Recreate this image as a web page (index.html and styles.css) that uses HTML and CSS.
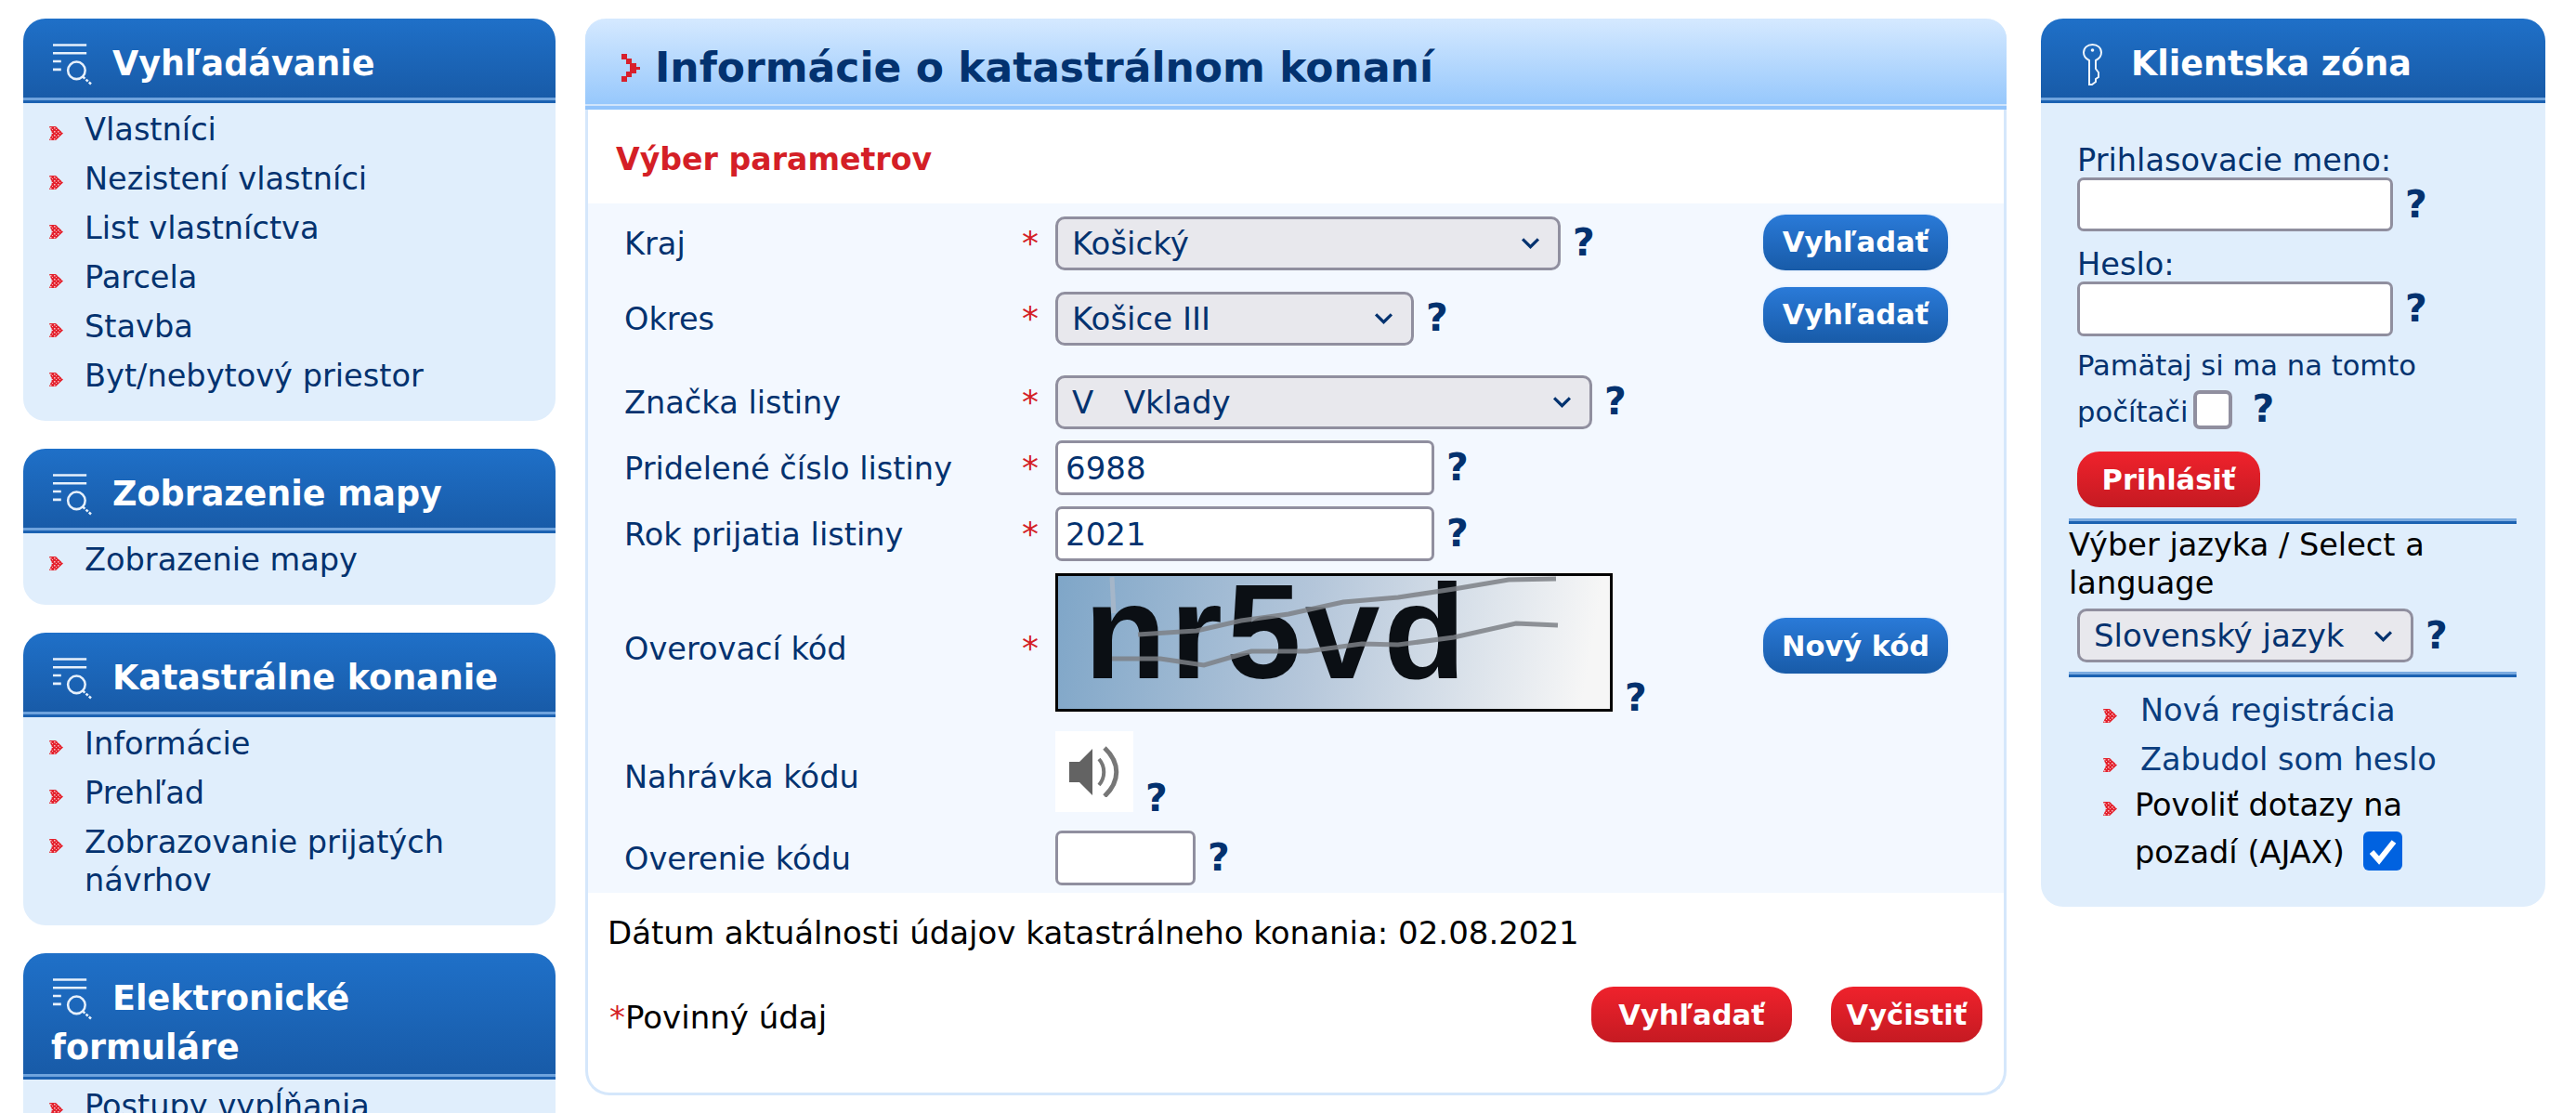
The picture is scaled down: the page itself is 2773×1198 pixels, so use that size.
FILE: index.html
```html
<!DOCTYPE html>
<html lang="sk">
<head>
<meta charset="utf-8">
<title>Informácie o katastrálnom konaní</title>
<link rel="stylesheet" href="styles.css">
</head>
<body>
<svg class="defs" width="0" height="0" aria-hidden="true">
  <defs>
    <pattern id="dith" width="4" height="4" patternUnits="userSpaceOnUse">
      <rect width="4" height="4" fill="#e3222e"/>
      <rect x="1" y="1" width="1.500" height="1.500" fill="#f8b9bd"/>
      <rect x="3" y="3" width="1" height="1" fill="#f8b9bd"/>
    </pattern>
    <symbol id="search" viewBox="0 0 44 46">
      <g fill="none" stroke="#e6f0fb" stroke-width="2.600">
        <path d="M0 2H37M0 11H37M0 20H9M0 29H9"/>
        <circle cx="26" cy="30" r="9.500"/>
        <path d="M33 37L42 45" stroke-dasharray="3 1.500"/>
      </g>
    </symbol>
    <symbol id="bullet" viewBox="0 0 15 15">
      <path d="M0 0H7L15 7.500L7 15H0L3 7.500Z" fill="url(#dith)"/>
    </symbol>
  </defs>
</svg>
<div class="page">
  <aside class="left">
    <section class="panel">
      <h2 class="phead"><svg class="hicon"><use href="#search"/></svg>Vyhľadávanie</h2>
      <ul class="menu">
        <li><svg class="bul"><use href="#bullet"/></svg><a>Vlastníci</a></li>
        <li><svg class="bul"><use href="#bullet"/></svg><a>Nezistení vlastníci</a></li>
        <li><svg class="bul"><use href="#bullet"/></svg><a>List vlastníctva</a></li>
        <li><svg class="bul"><use href="#bullet"/></svg><a>Parcela</a></li>
        <li><svg class="bul"><use href="#bullet"/></svg><a>Stavba</a></li>
        <li><svg class="bul"><use href="#bullet"/></svg><a>Byt/nebytový priestor</a></li>
      </ul>
    </section>
    <section class="panel">
      <h2 class="phead"><svg class="hicon"><use href="#search"/></svg>Zobrazenie mapy</h2>
      <ul class="menu">
        <li><svg class="bul"><use href="#bullet"/></svg><a>Zobrazenie mapy</a></li>
      </ul>
    </section>
    <section class="panel">
      <h2 class="phead"><svg class="hicon"><use href="#search"/></svg>Katastrálne konanie</h2>
      <ul class="menu">
        <li><svg class="bul"><use href="#bullet"/></svg><a>Informácie</a></li>
        <li><svg class="bul"><use href="#bullet"/></svg><a>Prehľad</a></li>
        <li><svg class="bul"><use href="#bullet"/></svg><a>Zobrazovanie prijatých<br>návrhov</a></li>
      </ul>
    </section>
    <section class="panel">
      <h2 class="phead"><svg class="hicon"><use href="#search"/></svg>Elektronické<br>formuláre</h2>
      <ul class="menu">
        <li><svg class="bul"><use href="#bullet"/></svg><a>Postupy vypĺňania</a></li>
      </ul>
    </section>
  </aside>

  <main class="center">
    <h1 class="mhead"><svg class="mbul" viewBox="0 0 20 30"><path d="M0 0H6V5H11V10H16V14H20V17H16V21H11V25H6V30H0V24H5V19H9V11H5V6H0Z" fill="#d8202c"/></svg>Informácie o katastrálnom konaní</h1>
    <h3 class="subhead">Výber parametrov</h3>
    <div class="formbox">
      <div class="row r-kraj">
        <span class="lab">Kraj</span><span class="req">*</span>
        <span class="sel w-kraj">Košický<svg class="chev" viewBox="0 0 20 12"><path d="M2 2L10 10L18 2"/></svg></span><b class="q">?</b>
        <button class="btn blue b-first">Vyhľadať</button>
      </div>
      <div class="row r-okres">
        <span class="lab">Okres</span><span class="req">*</span>
        <span class="sel w-okres">Košice III<svg class="chev" viewBox="0 0 20 12"><path d="M2 2L10 10L18 2"/></svg></span><b class="q">?</b>
        <button class="btn blue b-up">Vyhľadať</button>
      </div>
      <div class="row r-znacka">
        <span class="lab">Značka listiny</span><span class="req">*</span>
        <span class="sel w-znacka"><span class="pre">V   Vklady</span><svg class="chev" viewBox="0 0 20 12"><path d="M2 2L10 10L18 2"/></svg></span><b class="q">?</b>
      </div>
      <div class="row r-cislo">
        <span class="lab">Pridelené číslo listiny</span><span class="req">*</span>
        <span class="inp w-num">6988</span><b class="q">?</b>
      </div>
      <div class="row r-rok">
        <span class="lab">Rok prijatia listiny</span><span class="req">*</span>
        <span class="inp w-num">2021</span><b class="q">?</b>
      </div>
      <div class="row r-captcha">
        <span class="lab low">Overovací kód</span><span class="req low">*</span>
        <div class="captcha">
          <span class="ctext">nr5vd</span>
          <svg class="cnoise" viewBox="0 0 594 143">
            <g fill="none" stroke="#7d8186" stroke-width="5" opacity=".85">
              <path d="M86 63L149 59L197 48L248 41L307 28L366 23L426 14L485 4L536 3"/>
              <path d="M58 89L110 89L157 96L208 81L268 81L327 73L366 74L426 66L493 51L538 53"/>
              <path d="M58 1L60 40" stroke="#aab8c8"/>
            </g>
          </svg>
        </div>
        <b class="q q-bottom">?</b>
        <button class="btn blue b-down">Nový kód</button>
      </div>
      <div class="row r-audio">
        <span class="lab low2">Nahrávka kódu</span><span class="spacer"></span>
        <span class="audio"><svg viewBox="0 0 55 55"><path d="M0 17H11L25 3V53L11 39H0Z" fill="#636363"/><path d="M32 14C39 22 39 34 32 42" fill="none" stroke="#777" stroke-width="4"/><path d="M38 2C55 18 55 38 38 54" fill="none" stroke="#777" stroke-width="5"/></svg></span><b class="q q-bottom">?</b>
      </div>
      <div class="row r-over">
        <span class="lab">Overenie kódu</span><span class="spacer"></span>
        <span class="inp w-code"></span><b class="q">?</b>
      </div>
    </div>
    <p class="date">Dátum aktuálnosti údajov katastrálneho konania: 02.08.2021</p>
    <div class="foot">
      <span class="must"><span class="star">*</span>Povinný údaj</span>
      <button class="btn red w-search">Vyhľadať</button>
      <button class="btn red w-clear">Vyčistiť</button>
    </div>
  </main>

  <aside class="right">
    <section class="panel">
      <h2 class="phead"><svg class="kicon" viewBox="0 0 21 45"><path d="M7 18C3 16 1 13 1 9.500C1 4.500 5 1 10.500 1C16 1 20 4.500 20 9.500C20 13 18 16 14 18V27L17 31V36L14 38V41L10 44H7Z" fill="none" stroke="#eef5fc" stroke-width="2"/><circle cx="10.500" cy="7" r="1.800" fill="#eef5fc"/></svg>Klientska zóna</h2>
      <div class="login">
        <div class="llab">Prihlasovacie meno:</div>
        <div class="lrow"><span class="inp w-login h58"></span><b class="q">?</b></div>
        <div class="llab l2">Heslo:</div>
        <div class="lrow"><span class="inp w-login"></span><b class="q">?</b></div>
        <div class="remember">Pamätaj si ma na tomto<br>počítači<span class="chk"></span><b class="q q-in">?</b></div>
        <button class="btn red w-login-btn">Prihlásiť</button>
      </div>
      <div class="rule"></div>
      <div class="lang">
        <div class="langlab">Výber jazyka / Select a language</div>
        <div class="lrow lang-row"><span class="sel w-lang">Slovenský jazyk<svg class="chev" viewBox="0 0 20 12"><path d="M2 2L10 10L18 2"/></svg></span><b class="q">?</b></div>
      </div>
      <div class="rule"></div>
      <ul class="rlinks">
        <li><svg class="bul"><use href="#bullet"/></svg><a>Nová registrácia</a></li>
        <li class="second"><svg class="bul"><use href="#bullet"/></svg><a>Zabudol som heslo</a></li>
        <li class="ajax"><svg class="bul"><use href="#bullet"/></svg><span>Povoliť dotazy na<br>pozadí (AJAX)<span class="chk on"><svg viewBox="0 0 42 42"><path d="M9 22L17 31L33 11" fill="none" stroke="#fff" stroke-width="6"/></svg></span></span></li>
      </ul>
    </section>
  </aside>
</div>
</body>
</html>
```
FILE: styles.css
```css
html, body { margin: 0; padding: 0; height: 100%; overflow: hidden; background: #fff; }
body { font-family: "DejaVu Sans", Verdana, sans-serif; font-size: 33.6px; line-height: 40px; color: #03326f; }
.defs { position: absolute; }
.page { display: flex; align-items: flex-start; padding: 20px 33px 0 25px; }
.left { width: 573px; flex: none; display: flex; flex-direction: column; gap: 30px; }
.center { width: 1530px; flex: none; margin: 0 37px 0 32px; box-sizing: border-box; padding-bottom: 54px; border: 3px solid #d5e7fb; border-top: 0; border-radius: 22px 22px 26px 26px; background: #fff; }
.right { width: 543px; flex: none; }

.panel { background: #e0eefc; border-radius: 24px; overflow: hidden; }
.phead { margin: 0; box-sizing: border-box; min-height: 91px; padding: 22px 10px 8px 30px; font-size: 36.5px; line-height: 53px; font-weight: 700; color: #fff; background: linear-gradient(#1f70c8, #185ba8 calc(100% - 6px), #6fa3dd calc(100% - 6px), #6fa3dd calc(100% - 3px), #1c62b2 calc(100% - 3px)); }
.hicon { width: 43px; height: 46px; vertical-align: -11px; margin: 0 21px 0 2px; }
.kicon { width: 21px; height: 45px; vertical-align: -11px; margin: 0 31px 0 15px; }
.menu { list-style: none; margin: 0; padding: 8px 0 28px 28px; }
.menu li { display: flex; align-items: flex-start; line-height: 41px; margin-bottom: 12px; }
.menu li:last-child { margin-bottom: 0; }
.bul { width: 15px; height: 15px; flex: none; margin: 17px 23px 0 0; }

.mhead { margin: 0 -3px; height: 98px; box-sizing: border-box; display: flex; align-items: center; padding: 14px 0 6px 39px; font-size: 44px; font-weight: 700; color: #03326f; border-radius: 22px 22px 0 0; background: linear-gradient(#d5e9ff, #97c8fc calc(100% - 6px), #d0e4fb calc(100% - 6px), #d0e4fb calc(100% - 4px), #92c4fb calc(100% - 4px)); }
.mbul { width: 20px; height: 30px; margin-right: 16px; flex: none; }
.subhead { margin: 0; padding: 34px 0 27px 30px; font-size: 33.2px; line-height: 40px; font-weight: 700; color: #d41f26; }
.formbox { background: #f3f8ff; padding: 13px 0 8px; }
.row { display: flex; align-items: center; height: 59px; }
.lab { width: 467px; flex: none; padding: 3px 0 0 39px; box-sizing: border-box; }
.low { margin-top: 12px; }
.low2 { margin-top: 10px; }
.req { width: 36px; flex: none; color: #d41f26; font-size: 36px; }
.spacer { width: 36px; flex: none; }
.sel, .inp { box-sizing: border-box; height: 59px; display: flex; align-items: center; border: 3px solid #908f9f; border-radius: 7px; background: #fff; padding-left: 8px; font-size: 34px; color: #03326f; flex: none; }
.sel { background: #e8e8ed; border-radius: 10px; padding: 0 19px 0 15px; height: 58px; justify-content: space-between; }
.pre { white-space: pre; }
.chev { width: 21px; height: 13px; flex: none; }
.chev path { fill: none; stroke: #03326f; stroke-width: 3; }
.q { font-size: 41px; line-height: 41px; font-weight: 700; color: #03326f; margin-left: 13px; flex: none; }
.w-kraj { width: 544px; }
.w-okres { width: 386px; }
.w-znacka { width: 578px; }
.w-num { width: 408px; }
.w-code { width: 151px; }
.w-lang { width: 362px; }
.r-okres { margin-top: 22px; }
.r-znacka { margin-top: 31px; }
.r-cislo { margin-top: 12px; }
.r-rok { margin-top: 12px; }
.r-captcha { margin-top: 13px; height: 149px; }
.r-audio { margin-top: 21px; height: 87px; }
.r-over { margin-top: 20px; }
.btn { border: 0; border-radius: 24px; color: #fff; font-family: "DejaVu Sans", sans-serif; font-weight: 700; font-size: 30.500px; padding: 0; height: 60px; flex: none; }
.blue { margin: 0 60px 0 auto; width: 199px; background: linear-gradient(#2a7ad8, #185ba8); box-shadow: 0 0 3px #cfe3fb; }
.b-first { margin-top: -2px; }
.b-up { margin-top: -8px; }
.b-down { margin-top: 7px; }
.red { background: linear-gradient(#ef222c, #c51a22); }
.captcha { position: relative; box-sizing: border-box; width: 600px; height: 149px; flex: none; border: 3px solid #000; background: linear-gradient(100deg, #7fa6c8, #b4c6da 45%, #f6f6f6 95%); overflow: hidden; }
.ctext { position: absolute; left: 28px; top: 0; font-size: 145px; line-height: 120px; font-weight: 700; color: #0b0f14; font-family: "Liberation Sans", sans-serif; letter-spacing: 4px; filter: blur(0.7px); }
.cnoise { position: absolute; left: 0; top: 0; width: 100%; height: 100%; filter: blur(0.7px); }
.q-bottom { align-self: flex-end; margin-bottom: -6px; }
.audio { width: 84px; height: 87px; flex: none; background: #fff; display: flex; align-items: center; justify-content: center; }
.audio svg { width: 55px; height: 55px; }
.date { margin: 0; padding: 23px 0 0 21px; color: #000; font-size: 34px; }
.foot { display: flex; align-items: center; padding: 38px 23px 0 23px; }
.must { flex: 1; color: #000; font-size: 34px; padding-top: 5px; }
.star { color: #d41f26; }
.w-search { width: 216px; margin-right: 42px; }
.w-clear { width: 163px; }

.login { padding: 40px 0 0 39px; }
.llab { height: 38px; padding-top: 2px; }
.lrow { display: flex; align-items: center; }
.w-login { width: 340px; }
.h58 { height: 58px; }
.l2 { margin-top: 14px; }
.remember { font-size: 30.6px; line-height: 50px; margin-top: 7px; }
.chk { display: inline-block; box-sizing: border-box; width: 42px; height: 42px; vertical-align: -8px; margin-left: 5px; background: #fff; border: 4px solid #908f9f; border-radius: 7px; }
.q-in { margin-left: 22px; }
.w-login-btn { display: block; width: 197px; margin-top: 17px; }
.rule { margin: 12px 31px 0 30px; height: 6px; background: linear-gradient(#7aaae0 0 50%, #1c62b2 50%); }
.lang { margin: 0 31px 0 30px; padding-top: 2px; color: #000; }
.langlab { line-height: 41px; }
.lang-row { margin: 7px 0 0 9px; }
.lang + .rule { margin-top: 10px; }
.rlinks { list-style: none; margin: 0; padding: 16px 0 33px 67px; }
.rlinks li { display: flex; align-items: flex-start; margin-bottom: 13px; color: #0a3d7e; }
.rlinks li .bul { margin: 18px 25px 0 0; }
.rlinks .second { margin-bottom: 3px; }
.rlinks .ajax { color: #000; line-height: 51px; margin-bottom: 0; }
.rlinks .ajax .bul { margin: 22px 19px 0 0; }
.chk.on { background: #0062e0; border: 0; border-radius: 6px; margin-left: 20px; }
.chk.on svg { display: block; width: 42px; height: 42px; }
```
